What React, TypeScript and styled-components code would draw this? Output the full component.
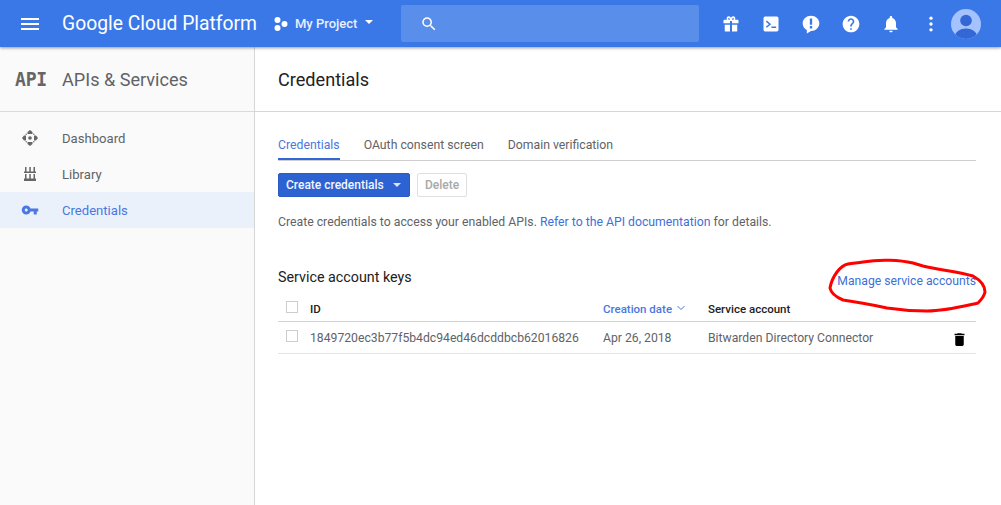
import React from "react";
import styled, { createGlobalStyle } from "styled-components";

const Global = createGlobalStyle`
  html, body { margin: 0; padding: 0; height: 100%; background: #fff; overflow: hidden; }
  body { font-family: Roboto, "Liberation Sans", sans-serif; }
  #root { height: 100%; }
`;

const Page = styled.div`
  position: relative;
  width: 1001px;
  height: 505px;
  overflow: hidden;
  display: flex;
  flex-direction: column;
`;

const TopBar = styled.header`
  height: 47px;
  flex: none;
  background: #3b78e7;
  color: #fff;
  display: flex;
  align-items: center;
  box-shadow: 0 1px 3px rgba(0, 0, 0, 0.4);
  position: relative;
  z-index: 2;
`;

const Menu = styled.svg`
  width: 24px;
  height: 24px;
  margin-left: 18px;
  fill: #fff;
`;

const Brand = styled.div`
  margin-left: 20px;
  font-size: 19.3px;
  white-space: nowrap;
  width: 195px;
`;

const Project = styled.div`
  margin-left: 17px;
  display: flex;
  align-items: center;
  width: 127px;
  font-size: 13px;
  font-weight: 500;
  color: #e8f0fe;
  white-space: nowrap;
`;

const ProjectName = styled.span`
  margin-left: 7px;
`;

const Caret = styled.span<{ $color: string }>`
  width: 0;
  height: 0;
  border-left: 4.5px solid transparent;
  border-right: 4.5px solid transparent;
  border-top: 4.5px solid ${(p) => p.$color};
`;

const HeaderCaret = styled(Caret)`
  margin-left: 8px;
  margin-bottom: 3px;
`;

const Search = styled.div`
  width: 298px;
  height: 37px;
  background: #5a8eeb;
  border-radius: 2px;
  display: flex;
  align-items: center;
  padding-left: 19px;
  box-sizing: border-box;
`;

const HeaderIcons = styled.div`
  margin-left: 12px;
  display: flex;
  align-items: center;
`;

const HeaderIcon = styled.svg`
  width: 20px;
  height: 20px;
  margin: 0 10px;
  fill: #fff;
  flex: none;
`;

const Avatar = styled.svg`
  width: 30px;
  height: 30px;
  flex: none;
`;

const Body = styled.div`
  flex: 1;
  display: flex;
  min-height: 0;
`;

const Sidebar = styled.aside`
  width: 255px;
  flex: none;
  box-sizing: border-box;
  background: #fafafa;
  border-right: 1px solid #d6d6d6;
`;

const SideHead = styled.div`
  height: 65px;
  box-sizing: border-box;
  border-bottom: 1px solid #dadada;
  display: flex;
  align-items: center;
`;

const ApiBadge = styled.span`
  width: 62px;
  padding-left: 15px;
  box-sizing: border-box;
  font-family: "DejaVu Sans Mono", "Liberation Mono", monospace;
  font-weight: 700;
  font-size: 19px;
  letter-spacing: -0.2px;
  color: #666;
  transform: scaleX(0.95);
  transform-origin: 15px 50%;
`;

const SideTitle = styled.span`
  font-size: 18.1px;
  color: #5f6368;
`;

const SideList = styled.nav`
  padding-top: 8px;
`;

const SideItem = styled.div<{ $active?: boolean }>`
  height: 36px;
  display: flex;
  align-items: center;
  font-size: 13.1px;
  color: ${(p) => (p.$active ? "#4a77e0" : "#5f6368")};
  background: ${(p) => (p.$active ? "#ebf1fb" : "transparent")};
`;

const SideIcon = styled.svg<{ $active?: boolean }>`
  width: 18px;
  height: 18px;
  margin-left: 21px;
  margin-right: 23px;
  fill: ${(p) => (p.$active ? "#4a77e0" : "#666")};
  flex: none;
`;

const Main = styled.main`
  flex: 1;
  min-width: 0;
`;

const TitleBar = styled.div`
  height: 65px;
  box-sizing: border-box;
  border-bottom: 1px solid #d6d6d6;
  padding-left: 23px;
  display: flex;
  align-items: center;
  font-size: 18.1px;
  color: #212121;
`;

const Content = styled.div`
  padding: 0 25px 0 23px;
`;

const Tabs = styled.div`
  margin-top: 22px;
  height: 26px;
  display: flex;
  gap: 24px;
  border-bottom: 1px solid #cfcfcf;
`;

const Tab = styled.div<{ $active?: boolean }>`
  height: 26px;
  box-sizing: border-box;
  padding-top: 4px;
  font-size: 12.25px;
  color: ${(p) => (p.$active ? "#4a77e0" : "#5f6368")};
  border-bottom: ${(p) => (p.$active ? "2px solid #3367d6" : "none")};
`;

const Actions = styled.div`
  margin-top: 12px;
  display: flex;
  gap: 7px;
`;

const PrimaryButton = styled.div`
  width: 132px;
  height: 24px;
  box-sizing: border-box;
  background: #2d62d3;
  border: 1px solid #2a5bc4;
  border-radius: 2px;
  color: #f2f6fd;
  font-size: 12px;
  font-weight: 500;
  display: flex;
  align-items: center;
  padding-left: 7px;
  white-space: nowrap;
`;

const ButtonCaret = styled(Caret)`
  margin-left: 9px;
`;

const DisabledButton = styled.div`
  width: 50px;
  height: 24px;
  box-sizing: border-box;
  border: 1px solid #e0e0e0;
  border-radius: 2px;
  color: #a8a8a8;
  font-size: 12px;
  font-weight: 500;
  display: flex;
  align-items: center;
  justify-content: center;
`;

const Intro = styled.p`
  margin: 17px 0 0;
  font-size: 12.25px;
  line-height: 16px;
  color: #5f6368;
`;

const Link = styled.span`
  color: #3f6fd8;
`;

const SectionHead = styled.div`
  margin-top: 38px;
  height: 25px;
  display: flex;
  justify-content: space-between;
  align-items: flex-start;
`;

const SectionTitle = styled.div`
  font-size: 14.3px;
  line-height: 18px;
  color: #212121;
`;

const ManageLink = styled(Link)`
  font-size: 12.2px;
  line-height: 16px;
  margin-top: 5px;
`;

const Row = styled.div<{ $head?: boolean }>`
  height: ${(p) => (p.$head ? "29px" : "32px")};
  padding-top: ${(p) => (p.$head ? "4px" : "0")};
  display: grid;
  grid-template-columns: 32px 293px 105px 1fr 32px;
  align-items: center;
  border-bottom: 1px solid ${(p) => (p.$head ? "#d2d2d2" : "#e4e4e4")};
  color: #5f6368;
  box-sizing: border-box;
`;

const Check = styled.span<{ $head?: boolean }>`
  width: 10px;
  height: 10px;
  margin-left: 8px;
  margin-bottom: ${(p) => (p.$head ? "4px" : "3px")};
  border: 1px solid #cdcdcd;
  display: block;
`;

const HeadCell = styled.span<{ $sorted?: boolean }>`
  font-size: 11.5px;
  font-weight: 500;
  color: ${(p) => (p.$sorted ? "#4a77e0" : "#212121")};
  display: flex;
  align-items: center;
  gap: 5px;
  white-space: nowrap;
`;

const Chevron = styled.svg`
  width: 8px;
  height: 6px;
  margin-bottom: 3px;
  fill: none;
  stroke: #4a77e0;
  stroke-width: 1;
`;

const Cell = styled.span`
  font-size: 12.2px;
  white-space: nowrap;
`;

const Trash = styled.svg`
  width: 17px;
  height: 17px;
  fill: #000;
  margin-left: 6.5px;
  margin-top: 3px;
`;

const Scribble = styled.svg`
  position: absolute;
  left: 0;
  top: 0;
  width: 1001px;
  height: 505px;
  pointer-events: none;
  z-index: 3;
  fill: none;
  stroke: #f00;
  stroke-width: 3;
  stroke-linejoin: round;
`;

export default function App() {
  return (
    <Page>
      <Global />
      <TopBar>
        <Menu viewBox="0 0 24 24">
          <path d="M3 18h18v-2H3v2zm0-5h18v-2H3v2zm0-7v2h18V6H3z" />
        </Menu>
        <Brand>Google Cloud Platform</Brand>
        <Project>
          <svg width="14" height="14" viewBox="0 0 14 14" fill="#fff">
            <circle cx="3.500" cy="3" r="3" />
            <circle cx="3.500" cy="11" r="3" />
            <circle cx="10.500" cy="7" r="3" />
          </svg>
          <ProjectName>My Project</ProjectName>
          <HeaderCaret $color="#fff" />
        </Project>
        <Search>
          <svg width="18" height="18" viewBox="0 0 24 24" fill="#fff">
            <path d="M15.5 14h-.79l-.28-.27A6.47 6.47 0 0 0 16 9.5 6.5 6.5 0 1 0 9.5 16c1.61 0 3.09-.59 4.23-1.57l.27.28v.79l5 4.99L20.49 19l-4.99-5zm-6 0C7.01 14 5 11.99 5 9.5S7.01 5 9.5 5 14 7.01 14 9.5 11.99 14 9.5 14z" />
          </svg>
        </Search>
        <HeaderIcons>
          <HeaderIcon viewBox="0 0 24 24">
            <path d="M10.8 21H5.5a1 1 0 0 1-1-1v-7h6.3v8zm2.4 0v-8h6.3v7a1 1 0 0 1-1 1h-5.3zM3 11V8a1 1 0 0 1 1-1h3.2a3 3 0 0 1-.4-1.5C6.8 3.8 8 2.8 9.3 2.8c1 0 1.900.6 2.700 1.700.8-1.100 1.700-1.700 2.700-1.700 1.300 0 2.500 1 2.500 2.700 0 .5-.1 1-.4 1.500H20a1 1 0 0 1 1 1v3h-7.800V8.500h-2.400V11H3zm6.300-6.300c-.5 0-.8.4-.8.9 0 .6.400 1.100 1.300 1.400h1.100c-.5-1.500-1-2.300-1.600-2.300zm5.400 0c-.6 0-1.100.8-1.600 2.300h1.100c.9-.3 1.300-.8 1.300-1.400 0-.5-.3-.9-.8-.9z" />
          </HeaderIcon>
          <HeaderIcon viewBox="0 0 24 24">
            <path fillRule="evenodd" d="M5 3h14a2 2 0 0 1 2 2v14a2 2 0 0 1-2 2H5a2 2 0 0 1-2-2V5a2 2 0 0 1 2-2zm.8 6.200 3.600 3-3.600 3 1.200 1.400 5.200-4.400L7 7.800 5.800 9.200zM12.500 15v1.800h5.700V15h-5.700z" />
          </HeaderIcon>
          <HeaderIcon viewBox="0 0 24 24">
            <path fillRule="evenodd" d="M12 2c5.500 0 10 4 10 9.200 0 5-4.500 9.300-10 9.300l-5 3v-4.300C3.800 17.700 2 14.600 2 11.200 2 6 6.500 2 12 2zm-1.400 3.500v7.500h2.800V5.500h-2.800zm0 9v2.800h2.800v-2.800h-2.800z" />
          </HeaderIcon>
          <HeaderIcon viewBox="0 0 24 24">
            <path d="M12 2C6.480 2 2 6.480 2 12s4.480 10 10 10 10-4.480 10-10S17.520 2 12 2zm1 17h-2v-2h2v2zm2.070-7.750l-.9.920C13.450 12.900 13 13.500 13 15h-2v-.5c0-1.100.45-2.100 1.170-2.830l1.240-1.260c.37-.36.590-.86.590-1.410 0-1.100-.9-2-2-2s-2 .9-2 2H8c0-2.210 1.790-4 4-4s4 1.790 4 4c0 .88-.36 1.680-.93 2.250z" />
          </HeaderIcon>
          <HeaderIcon viewBox="0 0 24 24">
            <path d="M12 22c1.100 0 2-.9 2-2h-4c0 1.100.89 2 2 2zm6-6v-5c0-3.070-1.640-5.640-4.500-6.320V4c0-.83-.67-1.500-1.500-1.500s-1.500.67-1.500 1.500v.68C7.630 5.360 6 7.920 6 11v5l-2 2v1h16v-1l-2-2z" />
          </HeaderIcon>
          <HeaderIcon viewBox="0 0 24 24">
            <circle cx="12" cy="5" r="2" />
            <circle cx="12" cy="12" r="2" />
            <circle cx="12" cy="19" r="2" />
          </HeaderIcon>
          <Avatar viewBox="0 0 30 30">
            <defs>
              <clipPath id="avatarClip">
                <circle cx="15" cy="15" r="15" />
              </clipPath>
            </defs>
            <g clipPath="url(#avatarClip)">
              <rect width="30" height="30" fill="#a4c2fb" />
              <circle cx="15" cy="11.500" r="5.800" fill="#3367d6" />
              <ellipse cx="15" cy="27" rx="11" ry="7.500" fill="#3367d6" />
            </g>
          </Avatar>
        </HeaderIcons>
      </TopBar>
      <Body>
        <Sidebar>
          <SideHead>
            <ApiBadge>API</ApiBadge>
            <SideTitle>APIs &amp; Services</SideTitle>
          </SideHead>
          <SideList>
            <SideItem>
              <SideIcon viewBox="0 0 18 18">
                <path d="M9 1l2.500 2v2h-5V3L9 1zM9 17l-2.500-2v-2h5v2L9 17zM1 9l2-2.500h2v5H3L1 9zM17 9l-2 2.500h-2v-5h2L17 9z" />
                <circle cx="9" cy="9" r="1.800" />
                <circle cx="5.200" cy="5.200" r=".7" />
                <circle cx="12.800" cy="5.200" r=".7" />
                <circle cx="5.200" cy="12.800" r=".7" />
                <circle cx="12.800" cy="12.800" r=".7" />
              </SideIcon>
              Dashboard
            </SideItem>
            <SideItem>
              <SideIcon viewBox="0 0 18 18">
                <path d="M4 2h1.500v4.500H4zM8.300 2h1.500v4.500H8.300zM12.500 2H14v4.500h-1.500zM3 6.500h12V8H3zM4 9h1.500v4.500H4zM8.300 9h1.500v4.500H8.300zM12.500 9H14v4.500h-1.500zM3 13.500h12V16H3z" />
              </SideIcon>
              Library
            </SideItem>
            <SideItem $active>
              <SideIcon $active viewBox="0 0 24 24">
                <path d="M12.650 10C11.830 7.670 9.610 6 7 6c-3.310 0-6 2.690-6 6s2.690 6 6 6c2.610 0 4.830-1.670 5.650-4H17v4h4v-4h2v-4H12.650zM7 14c-1.100 0-2-.9-2-2s.9-2 2-2 2 .9 2 2-.9 2-2 2z" />
              </SideIcon>
              Credentials
            </SideItem>
          </SideList>
        </Sidebar>
        <Main>
          <TitleBar>Credentials</TitleBar>
          <Content>
            <Tabs>
              <Tab $active>Credentials</Tab>
              <Tab>OAuth consent screen</Tab>
              <Tab>Domain verification</Tab>
            </Tabs>
            <Actions>
              <PrimaryButton>
                Create credentials
                <ButtonCaret $color="#dbe5f8" />
              </PrimaryButton>
              <DisabledButton>Delete</DisabledButton>
            </Actions>
            <Intro>
              Create credentials to access your enabled APIs.{" "}
              <Link>Refer to the API documentation</Link> for details.
            </Intro>
            <SectionHead>
              <SectionTitle>Service account keys</SectionTitle>
              <ManageLink>Manage service accounts</ManageLink>
            </SectionHead>
            <Row $head>
              <Check $head />
              <HeadCell>ID</HeadCell>
              <HeadCell $sorted>
                Creation date
                <Chevron viewBox="0 0 8 6">
                  <path d="M0.500 1l3.500 3.500L7.500 1" />
                </Chevron>
              </HeadCell>
              <HeadCell>Service account</HeadCell>
              <span />
            </Row>
            <Row>
              <Check />
              <Cell>1849720ec3b77f5b4dc94ed46dcddbcb62016826</Cell>
              <Cell>Apr 26, 2018</Cell>
              <Cell>Bitwarden Directory Connector</Cell>
              <Trash viewBox="0 0 24 24">
                <path d="M6 19c0 1.100.9 2 2 2h8c1.100 0 2-.9 2-2V7H6v12zM19 4h-3.500l-1-1h-5l-1 1H5v2h14V4z" />
              </Trash>
            </Row>
          </Content>
        </Main>
      </Body>
      <Scribble viewBox="0 0 1001 505">
        <path d="M863 262C880 259 900 260 913 263L923 266C940 270 960 272 973 276C980 280 985 286 985 292C984 297 981 300 978 303C960 307 945 311 927 311C912 311 900 310 887 308C873 305 858 302 843 300C836 297 831 293 830 288C831 282 834 276 837 272C840 268 843 265 848 264C853 263 858 263 863 262Z" />
      </Scribble>
    </Page>
  );
}
